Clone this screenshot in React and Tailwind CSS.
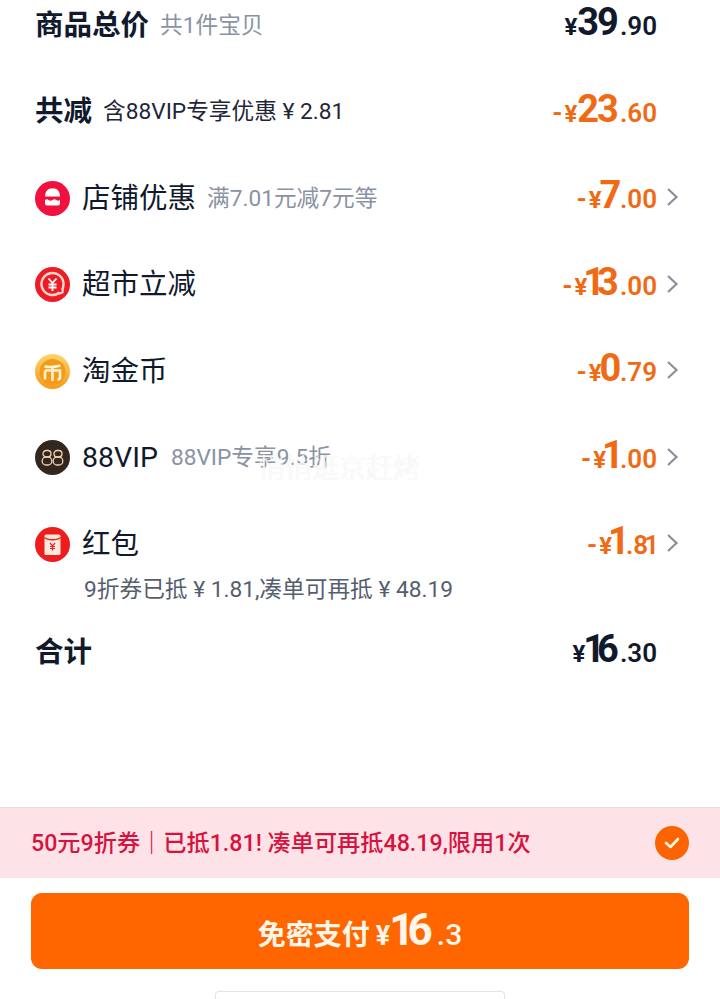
const CJK = '[font-family:Roboto,"Noto_Sans_CJK_SC",sans-serif]';

function BigDigits({ value, restClass }) {
  return value.split("").map((ch, i) => (
    <span key={i} className={ch === "1" ? "tracking-[-8px]" : restClass}>{ch}</span>
  ));
}

function CentDigits({ value }) {
  return value.split("").map((ch, i) => (
    <span key={i} className={value[i + 1] === "1" ? "tracking-[-4px]" : ch === "1" ? "tracking-[-2px]" : ""}>{ch}</span>
  ));
}

function Price({ prefix = "", big, cents, color, chevron }) {
  const startsWithOne = big[0] === "1";
  const single = big.length === 1;
  let offset = "";
  if (big === "16") offset = "-ml-[2px]";
  else if (startsWithOne) offset = "-ml-[4px]";
  else if (single) offset = "-ml-[2px]";
  return (
    <div className={`flex items-center ${color}`}>
      <div className="flex items-baseline font-bold mb-[1px]">
        {prefix && <span className="text-[26px] mr-[2px]">{prefix}</span>}
        <span className="text-[24px]">¥</span>
        <span className={`text-[38px] leading-none ${offset}`}>
          <BigDigits value={big} restClass={single ? "tracking-[-4.500px]" : "tracking-[-2px]"} />
        </span>
        <span className={`text-[26px] font-semibold ${single && startsWithOne ? "ml-[4px]" : "ml-[3px]"}`}>
          .<CentDigits value={cents} />
        </span>
      </div>
      <div className="w-[32px] flex pl-[9px]">
        {chevron && (
          <svg width="13" height="20" viewBox="0 0 13 20" fill="none" className="-mt-[2px]">
            <path d="M2 2l8.500 8L2 18" stroke="#8b8f99" strokeWidth="2.200" />
          </svg>
        )}
      </div>
    </div>
  );
}

function StoreIcon() {
  return (
    <svg width="35" height="35" viewBox="0 0 35 35">
      <circle cx="17.500" cy="17.500" r="17.500" fill="#f0113f" />
      <path d="M10 15.500c0-5 3-8 5.500-8h4c2.500 0 5.500 3 5.500 8z" fill="#fff" />
      <path d="M10 19c1.500-1 2.200-1 3.700 0s2.300 1 3.800 0 2.300-1 3.800 0 2.200 1 3.700 0v3.500a2 2 0 0 1-2 2h-11a2 2 0 0 1-2-2z" fill="#fff" />
    </svg>
  );
}

function MarketIcon() {
  return (
    <svg width="35" height="35" viewBox="0 0 35 35">
      <circle cx="17.500" cy="17.500" r="17.500" fill="#ee1c25" />
      <path d="M24.500 25.500A11 11 0 1 1 28.500 17.500c0 2-.5 3.700-1.500 5.300" fill="none" stroke="#fbd9d0" strokeWidth="2.400" />
      <path d="M23 27l4.500-1.500.5-5" fill="none" stroke="#fbd9d0" strokeWidth="2" />
      <path d="M13.500 11.500l4 4.500 4-4.500M17.500 16V24M13.500 17.500h8M13.500 20.500h8" fill="none" stroke="#fff" strokeWidth="1.800" />
    </svg>
  );
}

function CoinIcon() {
  return (
    <svg width="35" height="35" viewBox="0 0 35 35">
      <defs>
        <linearGradient id="coin" x1="0" y1="0" x2="0" y2="1">
          <stop offset="0" stopColor="#ffd36b" />
          <stop offset="1" stopColor="#f59a1c" />
        </linearGradient>
      </defs>
      <circle cx="17.500" cy="17.500" r="17.500" fill="url(#coin)" />
      <circle cx="17.500" cy="18" r="13" fill="#f49a1b" />
      <path d="M9.500 12.500c3 .5 11 .5 16-1M10 16.500h15v7.500c0 1-1 1.500-2.500 1M10 16.500V25.500M17.500 12.500V27" fill="none" stroke="#fff3cf" strokeWidth="2.600" />
    </svg>
  );
}

function VipIcon() {
  return (
    <div className="w-[35px] h-[35px] rounded-full bg-[#33261f] flex items-center justify-center">
      <svg width="23" height="18" viewBox="0 0 23 18" fill="none" stroke="#f0d3b0" strokeWidth="1.300">
        <rect x="2" y="1.500" width="8" height="6.500" rx="3.200" />
        <rect x="1.200" y="8" width="9.600" height="8" rx="3.800" />
        <rect x="13" y="1.500" width="8" height="6.500" rx="3.200" />
        <rect x="12.200" y="8" width="9.600" height="8" rx="3.800" />
      </svg>
    </div>
  );
}

function PacketIcon() {
  return (
    <svg width="35" height="35" viewBox="0 0 35 35">
      <circle cx="17.500" cy="17.500" r="17.500" fill="#ee1c1c" />
      <rect x="9.500" y="7.500" width="16" height="20.500" rx="1.500" fill="#fde9d9" />
      <path d="M9.500 10.500c3 3 13 3 16 0" fill="none" stroke="#ee1c1c" strokeWidth="1.300" />
      <path d="M15 16l2.500 2.800L20 16M17.500 18.800V23.500M15 19.500h5M15 21.500h5" fill="none" stroke="#e3202a" strokeWidth="1.200" />
    </svg>
  );
}

function Row({ icon, title, bold, sub, subClass = "text-[#8a93a3] ml-[11px]", price }) {
  return (
    <div className="flex items-center justify-between h-[40px]">
      <div className="flex items-center">
        {icon && <div className="w-[47px] shrink-0">{icon}</div>}
        <span className={`mt-[2px] text-[28.500px] text-[#11192d] ${bold ? "font-bold" : ""}`}>{title}</span>
        {sub && <span className={`mt-[2px] text-[22.700px] ${subClass}`}>{sub}</span>}
      </div>
      <Price {...price} />
    </div>
  );
}

const ORANGE = "text-[#f06a14]";
const DARK = "text-[#11192d]";

export default function App() {
  return (
    <div className={`relative w-[720px] h-[999px] overflow-hidden bg-white flex flex-col ${CJK}`}>
      <div className="flex flex-col gap-[46.500px] pt-[5px] pl-[35px] pr-[31px]">
        <Row title="商品总价" bold sub="共1件宝贝" price={{ big: "39", cents: "90", color: DARK }} />
        <Row title="共减" bold sub="含88VIP专享优惠 ¥ 2.81" subClass="text-[#1f2638] ml-[11px]" price={{ prefix: "-", big: "23", cents: "60", color: ORANGE }} />
        <Row icon={<StoreIcon />} title="店铺优惠" sub="满7.01元减7元等" price={{ prefix: "-", big: "7", cents: "00", color: ORANGE, chevron: true }} />
        <Row icon={<MarketIcon />} title="超市立减" price={{ prefix: "-", big: "13", cents: "00", color: ORANGE, chevron: true }} />
        <Row icon={<CoinIcon />} title="淘金币" price={{ prefix: "-", big: "0", cents: "79", color: ORANGE, chevron: true }} />
        <Row icon={<VipIcon />} title="88VIP" sub="88VIP专享9.5折" subClass="text-[#8a93a3] ml-[13px]" price={{ prefix: "-", big: "1", cents: "00", color: ORANGE, chevron: true }} />
        <div>
          <Row icon={<PacketIcon />} title="红包" price={{ prefix: "-", big: "1", cents: "81", color: ORANGE, chevron: true }} />
          <div className="pl-[49px] mt-[9px] text-[22.700px] leading-[33px] text-[#565e6e]">9折券已抵 ¥ 1.81,凑单可再抵 ¥ 48.19</div>
        </div>
      </div>
      <div className="mt-[26px] pl-[35px] pr-[31px]">
        <Row title="合计" bold price={{ big: "16", cents: "30", color: DARK }} />
      </div>

      <div className="mt-auto h-[71px] shrink-0 bg-[#fde3e8] border-t border-[#e5dcdd] pl-[31px] pr-[31px] flex items-center justify-between">
        <span className="text-[23.200px] font-medium text-[#d8123f]">50元9折券<span className="font-bold">｜</span>已抵1.81! 凑单可再抵48.19,限用1次</span>
        <div className="w-[34px] h-[34px] rounded-full bg-[#fb6400] flex items-center justify-center">
          <svg width="18" height="14" viewBox="0 0 18 14" fill="none">
            <path d="M3 7l4.500 4L15 3" stroke="#fff6e6" strokeWidth="2.600" strokeLinecap="round" strokeLinejoin="round" />
          </svg>
        </div>
      </div>
      <div className="shrink-0 px-[31px] pt-[15px]">
        <div className="h-[76px] rounded-[11px] bg-[#ff6600] flex items-baseline justify-center pt-[15px] text-[#fff6ea] font-bold">
          <span className="text-[28px]">免密支付</span>
          <span className="text-[27px] ml-[6px]">¥</span>
          <span className="text-[44px] leading-none -ml-[1px]"><span className="tracking-[-7px]">1</span><span className="tracking-[-2px]">6</span></span>
          <span className="text-[30px] ml-[6px] font-medium">.3</span>
        </div>
      </div>
      <div className="shrink-0 h-[30px] flex justify-center pt-[22px]">
        <div className="w-[290px] h-[8px] rounded-t-[4px] border border-b-0 border-[#e4e4e4] bg-white" />
      </div>

      <div className="absolute left-[258px] top-[449px] text-[27px] text-white/80 [text-shadow:0_0_1px_rgba(0,0,0,0.1)]">悄悄逛京赶烤</div>
    </div>
  );
}
